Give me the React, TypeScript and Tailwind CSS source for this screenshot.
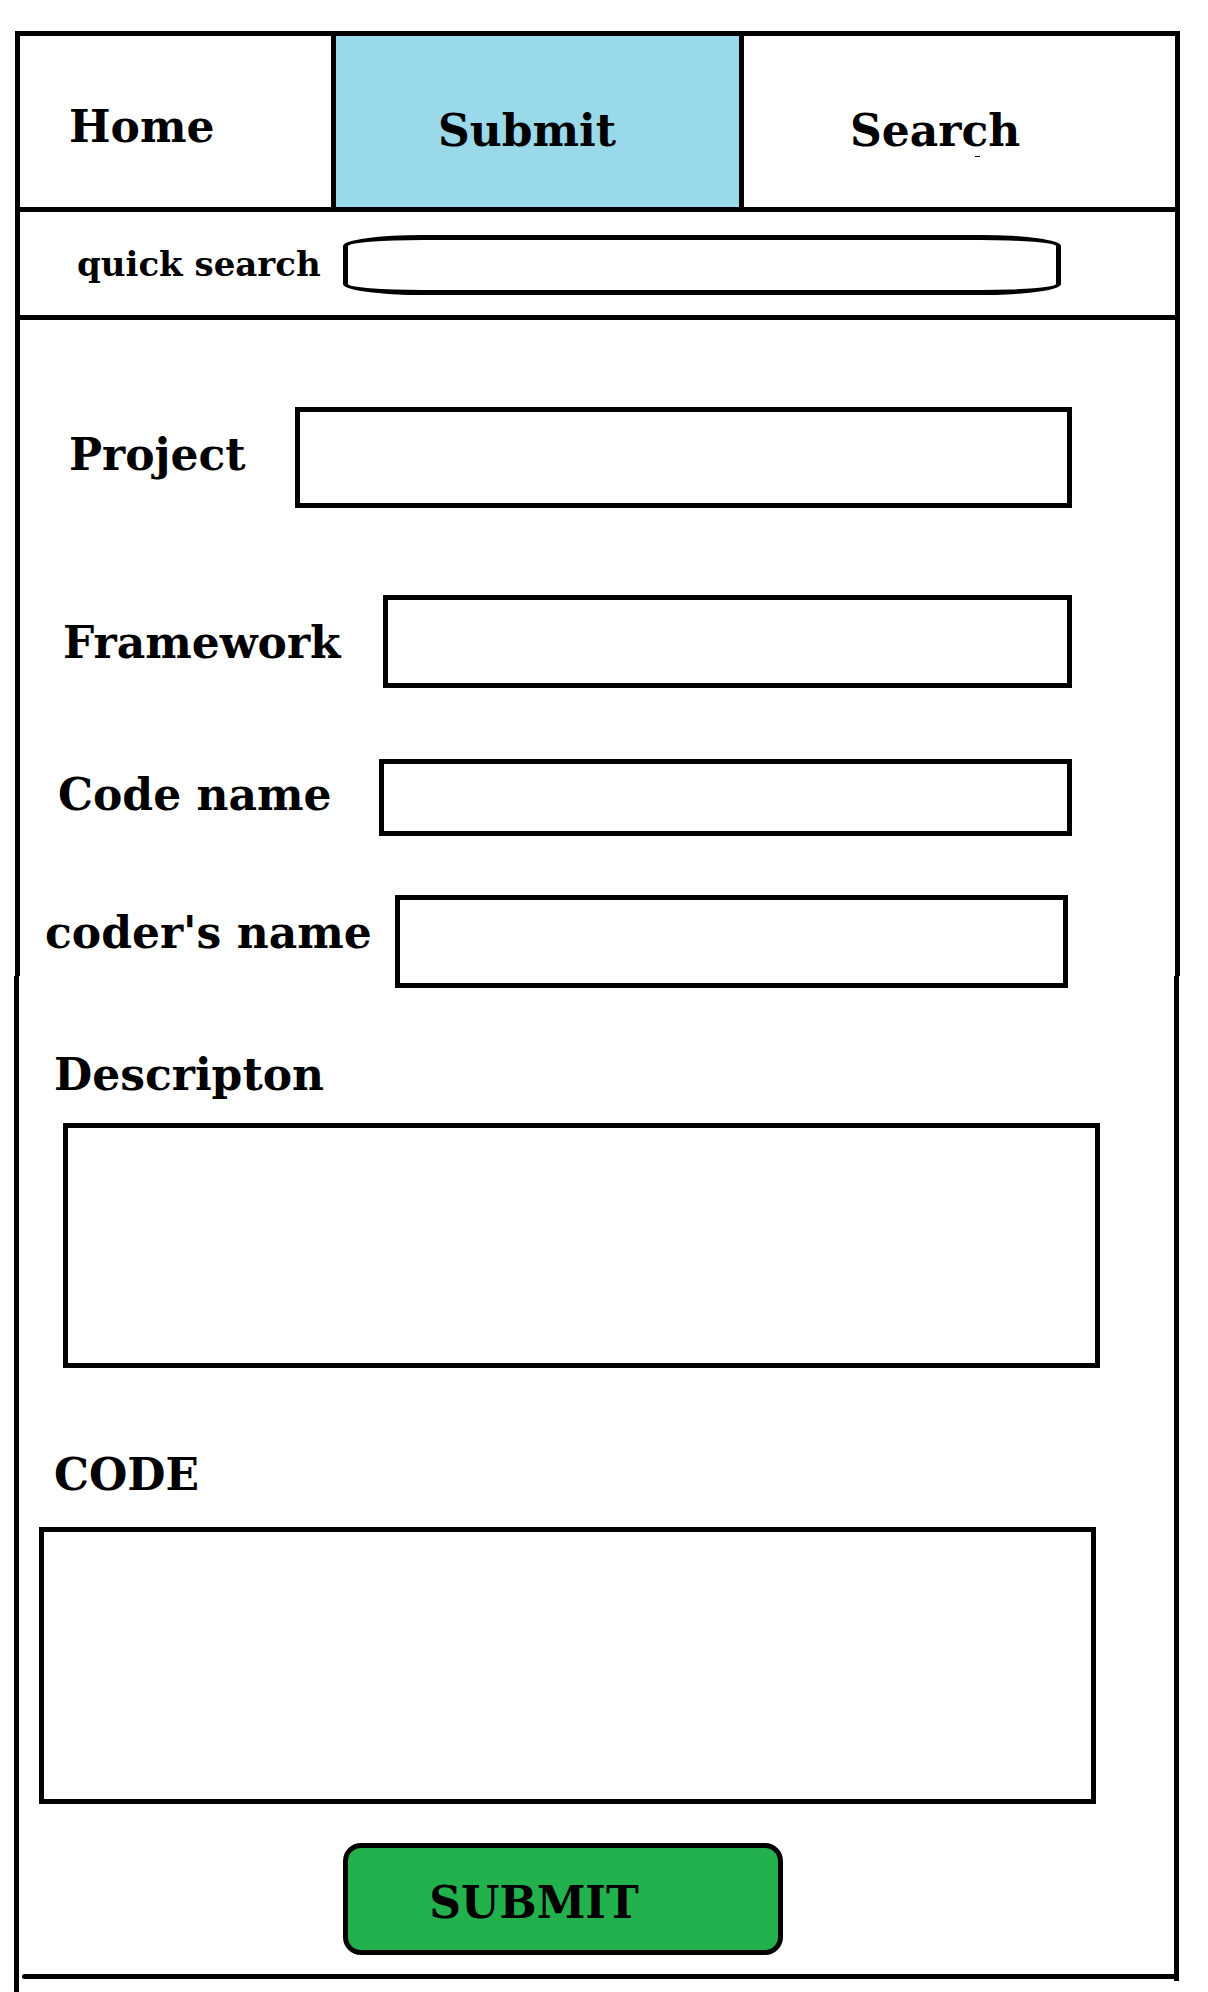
import React from "react";

const tab = "flex items-start border-black text-[44px] leading-12";
const label = "shrink-0 whitespace-nowrap text-[44px] leading-12";
const box = "min-w-0 rounded-none border-5 border-black bg-white px-4 text-3xl font-normal outline-none";

type FieldProps = {
  id: string;
  text: string;
  row: string;
  labelClass: string;
};

function Field({ id, text, row, labelClass }: FieldProps) {
  return (
    <div className={`flex items-stretch ${row}`}>
      <label htmlFor={id} className={`${label} ${labelClass}`}>
        {text}
      </label>
      <input id={id} name={id} type="text" className={`${box} flex-1`} />
    </div>
  );
}

export default function App() {
  return (
    <div className="flex min-h-screen bg-white pt-[31px] pr-7 pl-[14px] font-['DejaVu_Serif',serif] font-bold text-black">
      {/* Left rail of the hand-drawn frame */}
      <div className="flex w-1.5 shrink-0 flex-col">
        <div className="h-[945px] w-[5px] self-end bg-black" />
        <div className="w-[5px] flex-1 self-start bg-black" />
      </div>

      <div className="min-w-0 flex-1 border-t-5 border-black">
        <nav className="grid h-44 grid-cols-[316fr_408fr_431fr] border-b-5 border-black">
          <a href="#home" className={`${tab} border-r-5 pt-[67px] pl-[49px]`}>
            Home
          </a>
          <a href="#submit" aria-current="page" className={`${tab} border-r-5 bg-[#99d9ea] pt-[71px] pl-[102px]`}>
            Submit
          </a>
          <a href="#search" className={`${tab} pt-[71px] pl-[106px]`}>
            <span className="relative">
              Search
              <span className="absolute right-10 -bottom-0.5 h-px w-[5px] bg-black" />
            </span>
          </a>
        </nav>

        <form role="search" className="flex h-27 border-b-5 border-black pr-[114px]">
          <label htmlFor="quick" className="w-[323px] shrink-0 pt-7 pl-[57px] text-[34px] leading-12 whitespace-nowrap">
            quick search
          </label>
          <input
            id="quick"
            name="quick"
            type="text"
            className="mt-[23px] h-[60px] min-w-0 flex-1 rounded-[80px/11px] border-5 border-black bg-white px-6 text-2xl font-normal outline-none"
          />
        </form>

        <form className="flex flex-col">
          <Field id="project" text="Project" row="mt-[87px] h-[101px] pr-[103px]" labelClass="w-[275px] pt-6 pl-[49px]" />
          <Field id="framework" text="Framework" row="mt-[87px] h-[93px] pr-[103px]" labelClass="w-[363px] pt-6 pl-[43px]" />
          <Field id="codename" text="Code name" row="mt-[71px] h-[77px] pr-[103px]" labelClass="w-[359px] pt-3 pl-[38px]" />
          <Field id="coder" text="coder's name" row="mt-[59px] h-[93px] pr-[107px]" labelClass="w-[375px] pt-[14px] pl-[25px]" />

          <label htmlFor="description" className={`${label} mt-[63px] pl-[34px]`}>
            Descripton
          </label>
          <textarea id="description" name="description" className={`${box} mt-6 mr-[75px] ml-[43px] h-[245px] resize-none`} />

          <label htmlFor="code" className={`${label} mt-[83px] pl-[34px]`}>
            CODE
          </label>
          <textarea id="code" name="code" className={`${box} mt-7 mr-[79px] ml-[19px] h-[277px] resize-none`} />

          <button
            type="submit"
            className="mt-[39px] ml-[323px] h-28 w-[440px] rounded-[18px] border-5 border-black bg-[#22b14c] pt-2 pr-[58px] text-[44px] leading-12"
          >
            SUBMIT
          </button>
        </form>

        <hr className="mt-[19px] mb-[13px] ml-0.5 rounded-l-sm border-0 border-t-5 border-black" />
      </div>

      {/* Right rail, ending just under the bottom rule */}
      <div className="-ml-px flex w-1.5 shrink-0 flex-col pb-[11px]">
        <div className="h-[945px] w-[5px] self-end bg-black" />
        <div className="w-[5px] flex-1 self-start bg-black" />
      </div>
    </div>
  );
}
